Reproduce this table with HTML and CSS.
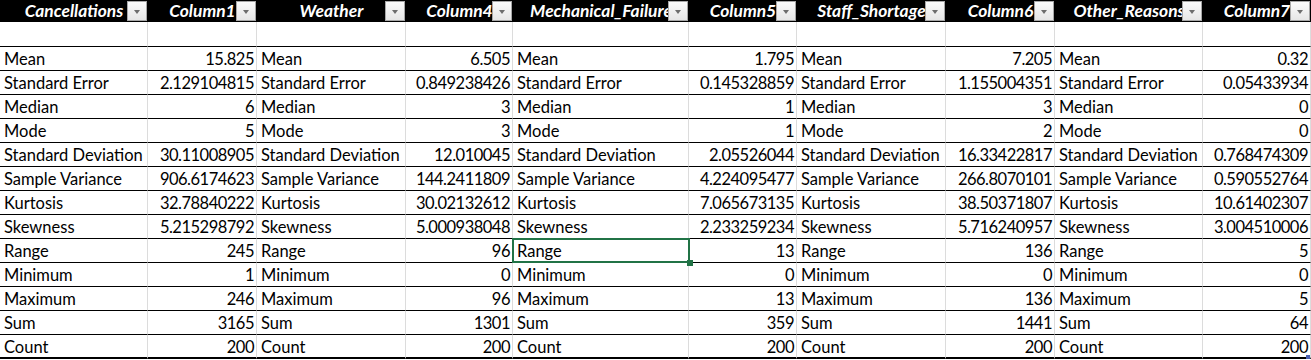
FILE: index.html
```html
<!DOCTYPE html>
<html>
<head>
<meta charset="utf-8">
<link rel="stylesheet" href="styles.css">
</head>
<body>
<div class="sheet">
  <div class="hd"><span class="ht">Cancellations</span><span class="dd"></span></div>
  <div class="hd"><span class="ht">Column1</span><span class="dd"></span></div>
  <div class="hd"><span class="ht">Weather</span><span class="dd"></span></div>
  <div class="hd"><span class="ht">Column4</span><span class="dd"></span></div>
  <div class="hd"><span class="ht">Mechanical_Failure</span><span class="dd"></span></div>
  <div class="hd"><span class="ht">Column5</span><span class="dd"></span></div>
  <div class="hd"><span class="ht">Staff_Shortage</span><span class="dd"></span></div>
  <div class="hd"><span class="ht">Column6</span><span class="dd"></span></div>
  <div class="hd"><span class="ht">Other_Reasons</span><span class="dd"></span></div>
  <div class="hd"><span class="ht">Column7</span><span class="dd"></span></div>

  <div class="c e"></div><div class="c e"></div><div class="c e"></div><div class="c e"></div><div class="c e"></div><div class="c e"></div><div class="c e"></div><div class="c e"></div><div class="c e"></div><div class="c e"></div>

  <div class="c">Mean</div><div class="c n">15.825</div><div class="c">Mean</div><div class="c n">6.505</div><div class="c">Mean</div><div class="c n">1.795</div><div class="c">Mean</div><div class="c n">7.205</div><div class="c">Mean</div><div class="c n">0.32</div>
  <div class="c">Standard Error</div><div class="c n">2.129104815</div><div class="c">Standard Error</div><div class="c n">0.849238426</div><div class="c">Standard Error</div><div class="c n">0.145328859</div><div class="c">Standard Error</div><div class="c n">1.155004351</div><div class="c">Standard Error</div><div class="c n">0.05433934</div>
  <div class="c">Median</div><div class="c n">6</div><div class="c">Median</div><div class="c n">3</div><div class="c">Median</div><div class="c n">1</div><div class="c">Median</div><div class="c n">3</div><div class="c">Median</div><div class="c n">0</div>
  <div class="c">Mode</div><div class="c n">5</div><div class="c">Mode</div><div class="c n">3</div><div class="c">Mode</div><div class="c n">1</div><div class="c">Mode</div><div class="c n">2</div><div class="c">Mode</div><div class="c n">0</div>
  <div class="c">Standard Deviation</div><div class="c n">30.11008905</div><div class="c">Standard Deviation</div><div class="c n">12.010045</div><div class="c">Standard Deviation</div><div class="c n">2.05526044</div><div class="c">Standard Deviation</div><div class="c n">16.33422817</div><div class="c">Standard Deviation</div><div class="c n">0.768474309</div>
  <div class="c">Sample Variance</div><div class="c n">906.6174623</div><div class="c">Sample Variance</div><div class="c n">144.2411809</div><div class="c">Sample Variance</div><div class="c n">4.224095477</div><div class="c">Sample Variance</div><div class="c n">266.8070101</div><div class="c">Sample Variance</div><div class="c n">0.590552764</div>
  <div class="c">Kurtosis</div><div class="c n">32.78840222</div><div class="c">Kurtosis</div><div class="c n">30.02132612</div><div class="c">Kurtosis</div><div class="c n">7.065673135</div><div class="c">Kurtosis</div><div class="c n">38.50371807</div><div class="c">Kurtosis</div><div class="c n">10.61402307</div>
  <div class="c">Skewness</div><div class="c n">5.215298792</div><div class="c">Skewness</div><div class="c n">5.000938048</div><div class="c">Skewness</div><div class="c n">2.233259234</div><div class="c">Skewness</div><div class="c n">5.716240957</div><div class="c">Skewness</div><div class="c n">3.004510006</div>
  <div class="c">Range</div><div class="c n">245</div><div class="c">Range</div><div class="c n">96</div><div class="c sel">Range</div><div class="c n">13</div><div class="c">Range</div><div class="c n">136</div><div class="c">Range</div><div class="c n">5</div>
  <div class="c">Minimum</div><div class="c n">1</div><div class="c">Minimum</div><div class="c n">0</div><div class="c">Minimum</div><div class="c n">0</div><div class="c">Minimum</div><div class="c n">0</div><div class="c">Minimum</div><div class="c n">0</div>
  <div class="c">Maximum</div><div class="c n">246</div><div class="c">Maximum</div><div class="c n">96</div><div class="c">Maximum</div><div class="c n">13</div><div class="c">Maximum</div><div class="c n">136</div><div class="c">Maximum</div><div class="c n">5</div>
  <div class="c">Sum</div><div class="c n">3165</div><div class="c">Sum</div><div class="c n">1301</div><div class="c">Sum</div><div class="c n">359</div><div class="c">Sum</div><div class="c n">1441</div><div class="c">Sum</div><div class="c n">64</div>
  <div class="c l">Count</div><div class="c n l">200</div><div class="c l">Count</div><div class="c n l">200</div><div class="c l">Count</div><div class="c n l">200</div><div class="c l">Count</div><div class="c n l">200</div><div class="c l">Count</div><div class="c n l last">200</div>
</div>
</body>
</html>
```

FILE: styles.css
```css
html, body {
  margin: 0;
  padding: 0;
  background: #ffffff;
}

.sheet {
  display: grid;
  grid-template-columns: 148px 109px 149px 107px 176px 108px 149px 109px 148px 108px;
  grid-auto-rows: 24px;
  grid-template-rows: 22px 25px;
  font-family: Lato, "Liberation Sans", sans-serif;
  font-size: 16.5px;
  color: #000;
  width: 1311px;
}

.hd {
  position: relative;
  background: #000;
  color: #fff;
  font-size: 17.4px;
  font-weight: bold;
  font-style: italic;
  display: flex;
  justify-content: center;
  align-items: flex-end;
  overflow: hidden;
  white-space: nowrap;
  padding-bottom: 3px;
  box-sizing: border-box;
  line-height: 17px;
}

.ht {
  flex: none;
}

.dd {
  position: absolute;
  right: 1px;
  top: 1px;
  width: 20px;
  height: 20px;
  box-sizing: border-box;
  border: 1px solid #a7a7a7;
  background: linear-gradient(#fbfbfb, #e6e6e6);
}

.dd::after {
  content: "";
  position: absolute;
  left: 6px;
  top: 8px;
  border-left: 3.5px solid transparent;
  border-right: 3.5px solid transparent;
  border-top: 4px solid #6d6d6d;
}

.c {
  position: relative;
  box-sizing: border-box;
  border-right: 1px solid #dcdcdc;
  border-bottom: 1px solid #000;
  padding: 0 2px 1px 4px;
  display: flex;
  align-items: flex-end;
  white-space: nowrap;
  overflow: visible;
  line-height: 19px;
}

.c.n {
  justify-content: flex-end;
  letter-spacing: -0.5px;
  padding-right: 2px;
}

.c.l {
  border-bottom: 2px solid #000;
  padding-bottom: 0;
}

.c.sel::after {
  content: "";
  position: absolute;
  left: -1px;
  top: -1px;
  right: -2px;
  bottom: -1px;
  border: 2px solid #217346;
}

.c.sel::before {
  content: "";
  position: absolute;
  right: -5px;
  bottom: -4px;
  width: 6px;
  height: 6px;
  background: #217346;
  z-index: 1;
}

.c.last::after {
  content: "";
  position: absolute;
  right: 0;
  bottom: -2px;
  width: 4px;
  height: 4px;
  background: #4a5fb0;
}
```
